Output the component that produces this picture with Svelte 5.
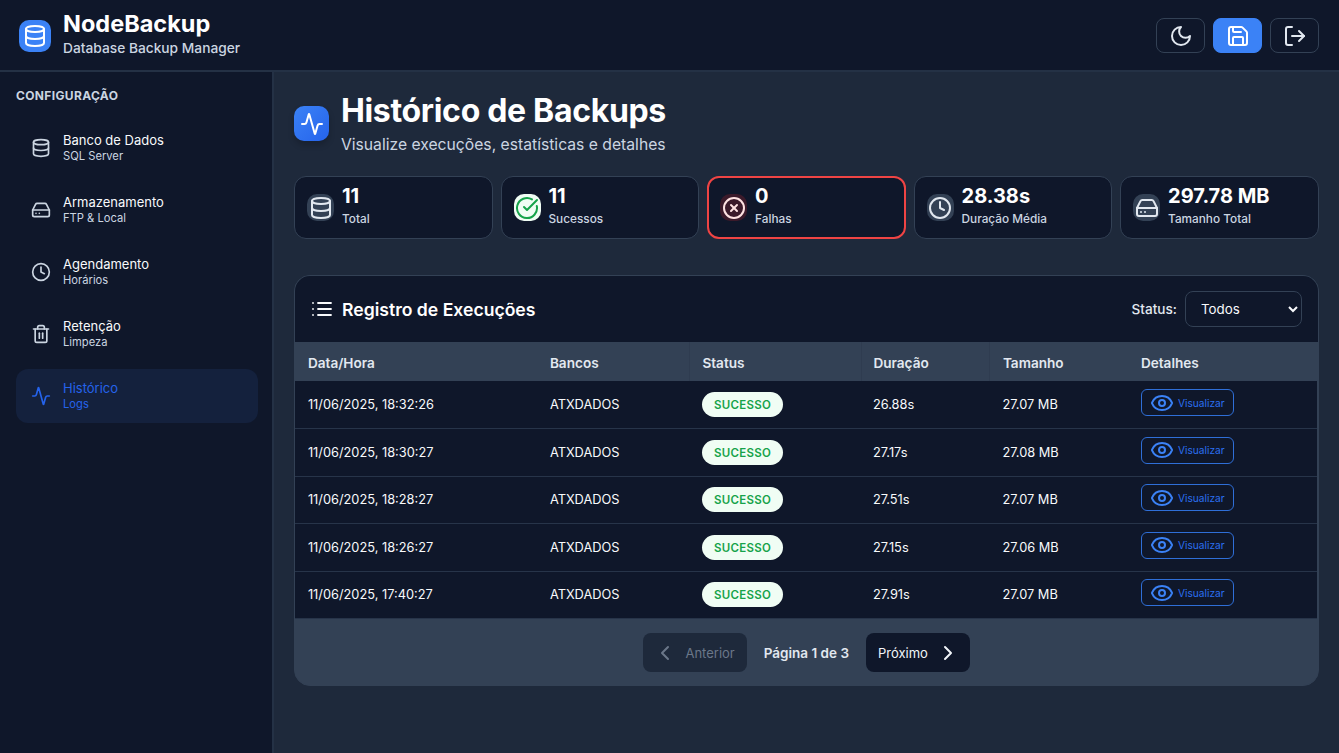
<script lang="ts">
  const nav = [
    { title: 'Banco de Dados', sub: 'SQL Server', icon: 'db' },
    { title: 'Armazenamento', sub: 'FTP & Local', icon: 'drive' },
    { title: 'Agendamento', sub: 'Horários', icon: 'clock' },
    { title: 'Retenção', sub: 'Limpeza', icon: 'trash' },
    { title: 'Histórico', sub: 'Logs', icon: 'pulse', active: true },
  ]

  const stats = [
    { value: '11', label: 'Total', icon: 'db', tone: '' },
    { value: '11', label: 'Sucessos', icon: 'check', tone: 'ok' },
    { value: '0', label: 'Falhas', icon: 'x', tone: 'bad' },
    { value: '28.38s', label: 'Duração Média', icon: 'clock', tone: '' },
    { value: '297.78 MB', label: 'Tamanho Total', icon: 'drive', tone: '' },
  ]

  const rows = [
    { date: '11/06/2025, 18:32:26', dur: '26.88s', size: '27.07 MB' },
    { date: '11/06/2025, 18:30:27', dur: '27.17s', size: '27.08 MB' },
    { date: '11/06/2025, 18:28:27', dur: '27.51s', size: '27.07 MB' },
    { date: '11/06/2025, 18:26:27', dur: '27.15s', size: '27.06 MB' },
    { date: '11/06/2025, 17:40:27', dur: '27.91s', size: '27.07 MB' },
  ]
</script>

{#snippet icon(name: string, size: number, sw = 2)}
  <svg width={size} height={size} viewBox="0 0 24 24" fill="none" stroke="currentColor" stroke-width={sw} stroke-linecap="round" stroke-linejoin="round">
    {#if name === 'db'}
      <ellipse cx="12" cy="5" rx="9" ry="3" />
      <path d="M3 5v14a9 3 0 0 0 18 0V5" />
      <path d="M3 12a9 3 0 0 0 18 0" />
    {:else if name === 'drive'}
      <path d="M22 12H2" />
      <path d="M5.45 5.11 2 12v6a2 2 0 0 0 2 2h16a2 2 0 0 0 2-2v-6l-3.45-6.89A2 2 0 0 0 16.76 4H7.24a2 2 0 0 0-1.79 1.11z" />
      <path d="M6 16h.01" />
      <path d="M10 16h.01" />
    {:else if name === 'clock'}
      <circle cx="12" cy="12" r="10" />
      <path d="M12 6v6l4 2" />
    {:else if name === 'trash'}
      <path d="M3 6h18" />
      <path d="M19 6v14a2 2 0 0 1-2 2H7a2 2 0 0 1-2-2V6" />
      <path d="M8 6V4a2 2 0 0 1 2-2h4a2 2 0 0 1 2 2v2" />
      <path d="M10 11v6" />
      <path d="M14 11v6" />
    {:else if name === 'pulse'}
      <path d="M22 12h-2.48a2 2 0 0 0-1.93 1.46l-2.35 8.36a.25.25 0 0 1-.48 0L9.24 2.18a.25.25 0 0 0-.48 0l-2.35 8.36A2 2 0 0 1 4.49 12H2" />
    {:else if name === 'check'}
      <path d="M21.8 10A10 10 0 1 1 17 3.34" />
      <path d="m9 11 3 3L22 4" />
    {:else if name === 'x'}
      <circle cx="12" cy="12" r="10" />
      <path d="m15 9-6 6" />
      <path d="m9 9 6 6" />
    {:else if name === 'moon'}
      <path d="M12 3a6 6 0 0 0 9 9 9 9 0 1 1-9-9Z" />
    {:else if name === 'save'}
      <path d="M15.2 3a2 2 0 0 1 1.4.6l3.8 3.8a2 2 0 0 1 .6 1.4V19a2 2 0 0 1-2 2H5a2 2 0 0 1-2-2V5a2 2 0 0 1 2-2z" />
      <path d="M17 21v-7a1 1 0 0 0-1-1H8a1 1 0 0 0-1 1v7" />
      <path d="M7 3v4a1 1 0 0 0 1 1h7" />
    {:else if name === 'logout'}
      <path d="M9 21H5a2 2 0 0 1-2-2V5a2 2 0 0 1 2-2h4" />
      <path d="m16 17 5-5-5-5" />
      <path d="M21 12H9" />
    {:else if name === 'list'}
      <path d="M8 6h13" />
      <path d="M8 12h13" />
      <path d="M8 18h13" />
      <path d="M3 6h.01" />
      <path d="M3 12h.01" />
      <path d="M3 18h.01" />
    {:else if name === 'eye'}
      <path d="M2.06 12.35a1 1 0 0 1 0-.7 10.75 10.75 0 0 1 19.88 0 1 1 0 0 1 0 .7 10.75 10.75 0 0 1-19.88 0" />
      <circle cx="12" cy="12" r="3" />
    {:else if name === 'left'}
      <path d="m15 18-6-6 6-6" />
    {:else if name === 'right'}
      <path d="m9 18 6-6-6-6" />
    {/if}
  </svg>
{/snippet}

<div class="app">
  <header class="topbar">
    <div class="brand">
      <div class="brand-icon">{@render icon('db', 24)}</div>
      <div class="brand-text">
        <h1>NodeBackup</h1>
        <p>Database Backup Manager</p>
      </div>
    </div>
    <div class="top-actions">
      <button class="top-btn">{@render icon('moon', 24)}</button>
      <button class="top-btn primary">{@render icon('save', 24)}</button>
      <button class="top-btn">{@render icon('logout', 24)}</button>
    </div>
  </header>

  <div class="body">
    <aside class="sidebar">
      <div class="side-label">CONFIGURAÇÃO</div>
      <nav>
        {#each nav as item}
          <div class="nav-item" class:active={item.active}>
            <span class="nav-icon">{@render icon(item.icon, 20)}</span>
            <div class="nav-text">
              <span class="nav-title">{item.title}</span>
              <span class="nav-sub">{item.sub}</span>
            </div>
          </div>
        {/each}
      </nav>
    </aside>

    <main class="content">
      <div class="page-head">
        <div class="page-icon">{@render icon('pulse', 24)}</div>
        <div class="page-text">
          <h2>Histórico de Backups</h2>
          <p>Visualize execuções, estatísticas e detalhes</p>
        </div>
      </div>

      <div class="stats">
        {#each stats as s}
          <div class="stat {s.tone}">
            <div class="stat-icon">{@render icon(s.icon, 24)}</div>
            <div class="stat-text">
              <div class="stat-value">{s.value}</div>
              <div class="stat-label">{s.label}</div>
            </div>
          </div>
        {/each}
      </div>

      <section class="card">
        <div class="card-head">
          <div class="card-title">
            {@render icon('list', 24, 1.8)}
            <h3>Registro de Execuções</h3>
          </div>
          <div class="filter">
            <span>Status:</span>
            <select>
              <option>Todos</option>
            </select>
          </div>
        </div>

        <table>
          <thead>
            <tr>
              <th class="c-date">Data/Hora</th>
              <th class="c-db">Bancos</th>
              <th class="c-status">Status</th>
              <th class="c-dur">Duração</th>
              <th class="c-size">Tamanho</th>
              <th>Detalhes</th>
            </tr>
          </thead>
          <tbody>
            {#each rows as r}
              <tr>
                <td>{r.date}</td>
                <td>ATXDADOS</td>
                <td><span class="badge">SUCESSO</span></td>
                <td>{r.dur}</td>
                <td>{r.size}</td>
                <td>
                  <button class="view">{@render icon('eye', 24)}<span>Visualizar</span></button>
                </td>
              </tr>
            {/each}
          </tbody>
        </table>

        <div class="pager">
          <button class="page-btn prev">{@render icon('left', 24)}<span>Anterior</span></button>
          <span class="page-info">Página 1 de 3</span>
          <button class="page-btn next">Próximo{@render icon('right', 24)}</button>
        </div>
      </section>
    </main>
  </div>
</div>

<style>
  :global(body) {
    margin: 0;
    background: #1e293b;
    font-family: Inter, "Liberation Sans", sans-serif;
  }

  .app {
    height: 753px;
    display: flex;
    flex-direction: column;
    overflow: hidden;
    color: #f8fafc;
  }

  h1, h2, h3, p {
    margin: 0;
  }

  button {
    font-family: inherit;
  }

  .topbar {
    height: 70px;
    flex-shrink: 0;
    box-sizing: content-box;
    display: flex;
    align-items: center;
    justify-content: space-between;
    padding: 0 20px 0 19px;
    background: #0f172a;
    border-bottom: 2px solid #243145;
  }

  .brand {
    display: flex;
    align-items: center;
    gap: 12px;
  }

  .brand-icon {
    width: 32px;
    height: 32px;
    border-radius: 10px;
    background: #3b82f6;
    color: #fff;
    display: flex;
    align-items: center;
    justify-content: center;
    margin-top: 1px;
  }

  .brand-text {
    margin-top: -4px;
  }

  .brand h1 {
    font-size: 23.5px;
    line-height: 30px;
    font-weight: 700;
    color: #fff;
  }

  .brand p {
    font-size: 13.75px;
    line-height: 20px;
    margin-top: -1px;
    font-weight: 500;
    color: #cbd5e1;
  }

  .top-actions {
    display: flex;
    gap: 8px;
    margin-top: 1px;
  }

  .top-btn {
    width: 49px;
    height: 35px;
    padding: 0;
    border-radius: 8px;
    border: 1px solid #334155;
    background: transparent;
    color: #e2e8f0;
    display: flex;
    align-items: center;
    justify-content: center;
  }

  .top-btn.primary {
    background: #3b82f6;
    border-color: #3b82f6;
    color: #fff;
  }

  .body {
    flex: 1;
    display: flex;
    min-height: 0;
  }

  .sidebar {
    width: 274.4px;
    flex-shrink: 0;
    box-sizing: border-box;
    padding: 16px 16px 0;
    background: #0f172a;
    border-right: 2px solid #243145;
  }

  .side-label {
    font-size: 12px;
    line-height: 16px;
    font-weight: 700;
    letter-spacing: 0.35px;
    color: #cbd5e1;
    margin-bottom: 17px;
  }

  nav {
    display: flex;
    flex-direction: column;
    gap: 8px;
    width: 242px;
  }

  .nav-item {
    height: 54px;
    display: flex;
    align-items: center;
    gap: 12px;
    padding-left: 15px;
    border-radius: 12px;
    color: #f8fafc;
  }

  .nav-icon {
    display: flex;
    color: #cbd5e1;
  }

  .nav-text {
    display: flex;
    flex-direction: column;
    margin-top: -2px;
  }

  .nav-title {
    font-size: 13px;
    line-height: 17px;
  }

  .nav-sub {
    font-size: 11.2px;
    line-height: 14px;
    color: #cbd5e1;
  }

  .nav-item.active {
    background: #14213d;
    color: #2563eb;
  }

  .nav-item.active .nav-icon,
  .nav-item.active .nav-sub {
    color: #2563eb;
  }

  .content {
    flex: 1;
    min-width: 0;
    padding: 18px 20px 0 20px;
  }

  .page-head {
    display: flex;
    align-items: center;
    gap: 11.5px;
    height: 68px;
  }

  .page-icon {
    width: 35px;
    height: 35px;
    border-radius: 10px;
    background: linear-gradient(135deg, #3b82f6, #2563eb);
    box-shadow: 0 4px 6px rgba(0, 0, 0, 0.2);
    color: #fff;
    display: flex;
    align-items: center;
    justify-content: center;
    margin-top: -1px;
  }

  .page-text {
    margin-top: 1px;
  }

  .page-head h2 {
    font-size: 32px;
    line-height: 38px;
    letter-spacing: -0.32px;
    font-weight: 700;
    color: #fff;
  }

  .page-head p {
    font-size: 15.7px;
    line-height: 24px;
    margin-top: 3px;
    color: #cbd5e1;
  }

  .stats {
    display: grid;
    grid-template-columns: repeat(5, 1fr);
    gap: 8px;
    margin-top: 18px;
  }

  .stat {
    height: 63px;
    box-sizing: border-box;
    display: flex;
    align-items: center;
    gap: 7.6px;
    padding: 0 12px;
    background: #0f172a;
    border: 1px solid #334155;
    border-radius: 12px;
  }

  .stat.bad {
    border: 2px solid #ef4444;
    padding: 0 11px;
  }

  .stat-icon {
    width: 27px;
    height: 27px;
    flex-shrink: 0;
    border-radius: 10px;
    background: #334155;
    color: #e2e8f0;
    display: flex;
    align-items: center;
    justify-content: center;
  }

  .stat.ok .stat-icon {
    background: #f0fdf4;
    color: #16a34a;
  }

  .stat.bad .stat-icon {
    background: #3b1a2a;
    color: #fee2e2;
  }

  .stat-text {
    margin-top: -4px;
  }

  .stat-value {
    font-size: 20px;
    line-height: 24px;
    font-weight: 700;
    color: #fff;
  }

  .stat-label {
    font-size: 11.8px;
    line-height: 16px;
    margin-top: 3px;
    font-weight: 500;
    color: #cbd5e1;
  }

  .card {
    margin-top: 36px;
    background: #334155;
    border: 1px solid #334155;
    border-radius: 16px;
    overflow: hidden;
  }

  .card-head {
    height: 66px;
    display: flex;
    align-items: center;
    justify-content: space-between;
    padding: 0 16px 0 15px;
    background: #0f172a;
  }

  .card-title {
    display: flex;
    align-items: center;
    gap: 7.6px;
    color: #f8fafc;
  }

  .card-title h3 {
    font-size: 17.6px;
    font-weight: 600;
    color: #fff;
  }

  .filter {
    display: flex;
    align-items: center;
    gap: 8px;
    font-size: 13.6px;
    font-weight: 500;
    color: #e2e8f0;
  }

  .filter select {
    width: 117px;
    height: 36px;
    padding: 0 11px 1px;
    font-family: inherit;
    font-size: 13.33px;
    color: #f8fafc;
    background: #0f172a;
    border: 1px solid #334155;
    border-radius: 8px;
  }

  table {
    width: calc(100% - 1px);
    border-collapse: collapse;
    table-layout: fixed;
    background: #0f172a;
    font-size: 12.8px;
  }

  th {
    height: 39px;
    padding: 2px 12px 0 12.5px;
    box-sizing: border-box;
    text-align: left;
    font-size: 13.6px;
    font-weight: 600;
    color: #e2e8f0;
    background: #334155;
  }

  .c-date { width: 242px; }
  .c-db { width: 152px; border-right: 1px solid #2f3c50; }
  .c-status { width: 172px; border-right: 1px solid #2f3c50; }
  .c-dur { width: 128px; border-right: 1px solid #2f3c50; }
  .c-size { width: 139px; }

  th:nth-child(4),
  td:nth-child(4) {
    padding-left: 11.5px;
  }

  th:nth-child(5),
  td:nth-child(5) {
    padding-left: 13px;
  }

  td {
    height: 47.5px;
    padding: 0 12px 0 12.5px;
    box-sizing: border-box;
    color: #f8fafc;
    font-weight: 400;
    border-bottom: 1px solid #273449;
  }

  .badge {
    display: inline-block;
    padding: 1px 12px 0;
    line-height: 24px;
    border-radius: 13px;
    background: #f0fdf4;
    color: #16a34a;
    font-size: 11.5px;
    font-weight: 600;
    letter-spacing: 0.3px;
  }

  .view {
    display: inline-flex;
    align-items: center;
    gap: 4px;
    height: 27px;
    padding: 0 8px;
    margin-top: -4px;
    vertical-align: middle;
    background: transparent;
    border: 1px solid #2f6fd8;
    border-radius: 6px;
    color: #3b82f6;
    font-size: 10.2px;
  }

  .view span {
    color: #2b6ff0;
  }

  .pager {
    height: 66px;
    display: flex;
    align-items: center;
    justify-content: center;
    gap: 17px;
    background: #334155;
  }

  .page-btn {
    height: 39px;
    display: flex;
    align-items: center;
    gap: 8px;
    border: none;
    border-radius: 8px;
    background: #0f172a;
    color: #f1f5f9;
    font-size: 13px;
  }

  .page-btn.next {
    padding: 1px 10px 0 12px;
  }

  .page-btn.prev {
    padding: 1px 12px 0 10px;
    background: #1e293b;
    color: #6b7789;
  }

  .page-info {
    font-size: 13.5px;
    font-weight: 600;
    margin-top: 2px;
    color: #e2e8f0;
  }
</style>
